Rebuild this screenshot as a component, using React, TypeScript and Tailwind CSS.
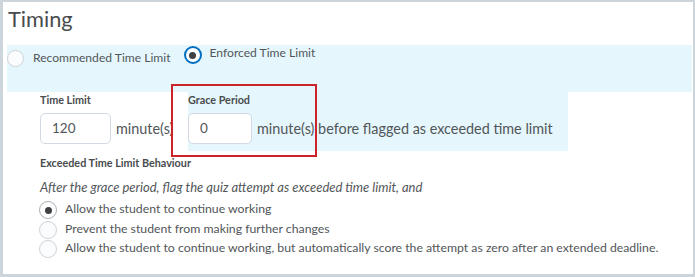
import React from "react";

function Radio({ checked = false, focused = false, size = 17 }: { checked?: boolean; focused?: boolean; size?: number }) {
  const cls = focused
    ? "border-2 border-[#006fbf] bg-white"
    : checked
    ? "border border-[#a9b0b5] bg-white"
    : "border border-[#cdd3d8] bg-[#fbfcfd]";
  return (
    <span
      className={`flex shrink-0 items-center justify-center rounded-full ${cls}`}
      style={{ width: size, height: size }}
    >
      {checked && <span className="block h-[7px] w-[7px] rounded-full bg-[#3f4244]" />}
    </span>
  );
}

export default function App() {
  return (
    <div
      className="relative h-[277px] w-[695px] overflow-hidden border-b-[3px] border-l-[3px] border-r-2 border-t-2 border-[#cdd5dc] bg-white text-[#494c4e]"
      style={{ fontFamily: "Lato, 'Open Sans', sans-serif" }}
    >
      <div className="ml-[5px] mt-[3px] text-[21.8px] leading-[28px] text-[#494c4e]">Timing</div>

      {/* Blue band with time limit type */}
      <div className="ml-[4px] mr-[1px] mt-[12px] flex h-[47px] items-start bg-[#e5f6fd] text-[12.1px] leading-[17px] text-[#525659]">
        <div className="mt-[5px] flex items-start">
          <Radio />
          <span className="ml-[9px] mt-[-1px]">Recommended Time Limit</span>
        </div>
        <div className="ml-[13px] mt-[1px] flex items-start">
          <Radio checked focused size={18} />
          <span className="ml-[8px] mt-[-2px]">Enforced Time Limit</span>
        </div>
      </div>

      {/* Time limit / grace period row */}
      <div className="flex items-stretch">
        <div className="ml-[37px] w-[148px] pt-[1px]">
          <div className="text-[10.8px] font-bold leading-[13px] text-[#494c4e]">Time Limit</div>
          <div className="mt-[7px] flex items-center">
            <div className="flex h-[31px] w-[71px] items-center rounded-[5px] border border-[#d3d9e3] bg-white pl-[11px] text-[13.5px] text-[#525659]">
              120
            </div>
            <span className="ml-[5px] text-[14.4px] text-[#525659]">minute(s)</span>
          </div>
        </div>
        <div className="w-[380px] bg-[#e5f6fd] pb-[7px] pt-[1px]">
          <div className="text-[10.8px] font-bold leading-[13px] text-[#494c4e]">Grace Period</div>
          <div className="mt-[7px] flex items-center">
            <div className="flex h-[31px] w-[64px] items-center rounded-[5px] border border-[#d3d9e3] bg-white pl-[11px] text-[13.5px] text-[#525659]">
              0
            </div>
            <span className="ml-[5px] text-[14.4px] text-[#525659]">minute(s) before flagged as exceeded time limit</span>
          </div>
        </div>
      </div>

      {/* Exceeded behaviour */}
      <div className="ml-[37px]">
        <div className="mt-[5px] text-[10.8px] font-bold leading-[13px] text-[#494c4e]">Exceeded Time Limit Behaviour</div>
        <div className="mt-[10px] text-[13px] italic leading-[17px] text-[#525659]">
          After the grace period, flag the quiz attempt as exceeded time limit, and
        </div>
        <div className="mt-[3px] whitespace-nowrap text-[12.28px] leading-[19.5px] text-[#525659]">
          {[
            { t: "Allow the student to continue working", c: true },
            { t: "Prevent the student from making further changes", c: false },
            {
              t: "Allow the student to continue working, but automatically score the attempt as zero after an extended deadline.",
              c: false,
            },
          ].map((r) => (
            <div key={r.t} className="flex h-[19.5px] items-start">
              <span className="ml-[-1px] mt-[2px]">
                <Radio checked={r.c} size={18} />
              </span>
              <span className="ml-[8px]">{r.t}</span>
            </div>
          ))}
        </div>
      </div>

      {/* Red highlight box */}
      <div className="pointer-events-none absolute left-[168px] top-[82px] h-[73px] w-[146px] border-2 border-[#cc2229]" />
    </div>
  );
}
